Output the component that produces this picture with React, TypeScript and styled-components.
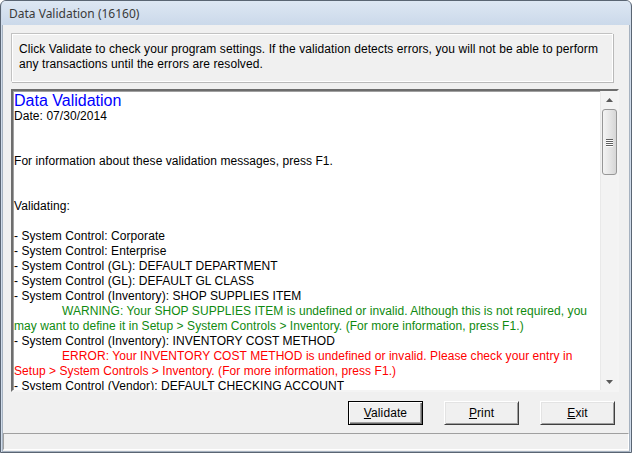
import React from 'react'
import styled, {createGlobalStyle} from 'styled-components'

const GlobalStyle = createGlobalStyle`
	html, body {
		margin: 0;
		padding: 0;
		background: #ffffff;
	}
	body {
		font-family: 'Liberation Sans', Arial, sans-serif;
		font-size: 12px;
	}
`

const Window = styled.div`
	width: 632px;
	height: 453px;
	box-sizing: border-box;
	border: 1px solid #5a6573;
	border-radius: 6px 6px 0 0;
	background: #cfdbea;
	padding: 0 1px;
	display: flex;
	flex-direction: column;
	overflow: hidden;
`

const TitleBar = styled.div`
	height: 24px;
	flex: none;
	display: flex;
	align-items: center;
	padding-left: 7px;
	background: linear-gradient(#dde7f3, #cbd9ea);
	color: #3a3a3a;
	font-family: 'Noto Sans', 'Open Sans', sans-serif;
	font-size: 12px;
`

const Body = styled.div`
	flex: 1;
	display: flex;
	flex-direction: column;
	background: #f0f0f0;
	border: 1px solid #a6b2c0;
	border-top: none;
`

const Content = styled.div`
	display: flex;
	flex-direction: column;
	padding: 8px 10px 0 8px;
`

const InfoBox = styled.div`
	height: 49px;
	box-sizing: border-box;
	margin-right: 6px;
	padding: 8px 7px 0 7px;
	border: 1px solid #c2c2c2;
	border-right-color: #ffffff;
	border-bottom-color: #ffffff;
	box-shadow: inset 1px 1px 0 #ffffff, 1px 1px 0 #b9b9b9;
	line-height: 15px;
	letter-spacing: 0.08px;
	color: #000;
`

const TextBox = styled.div`
	margin-top: 7px;
	height: 303px;
	box-sizing: border-box;
	display: flex;
	background: #ffffff;
	border-style: solid;
	border-width: 2px;
	border-color: #6d6d6d #f4f4f4 #f4f4f4 #6d6d6d;
	box-shadow: inset 1px 1px 0 #a0a0a0;
`

const Report = styled.div`
	flex: 1;
	overflow: hidden;
	padding: 2px 0 0 1px;
	line-height: 15px;
	letter-spacing: 0.06px;
	color: #000;
`

const Heading = styled.div`
	font-size: 16px;
	line-height: 16px;
	letter-spacing: 0;
	color: #0000ff;
`

const Line = styled.div<{$tone?: 'warn' | 'error'; $indent?: boolean}>`
	white-space: pre;
	height: 15px;
	padding-left: ${p => (p.$indent ? '48px' : '0')};
	color: ${p => (p.$tone === 'warn' ? '#0f8a0f' : p.$tone === 'error' ? '#ff0000' : '#000')};
`

const ScrollBar = styled.div`
	width: 17px;
	flex: none;
	display: flex;
	flex-direction: column;
	background: #f3f3f3;
	border-left: 1px solid #e9e9e9;
	box-sizing: border-box;
`

const ArrowButton = styled.div`
	height: 17px;
	flex: none;
	display: flex;
	align-items: center;
	justify-content: center;
`

const Track = styled.div`
	flex: 1;
	padding-top: 1px;
`

const Thumb = styled.div`
	height: 66px;
	margin-left: 1px;
	box-sizing: border-box;
	border: 1px solid #979797;
	border-radius: 3px;
	background: linear-gradient(to right, #f4f4f4, #e6e6e6 50%, #d6d6d6);
	display: flex;
	align-items: center;
	justify-content: center;
`

const Grip = styled.div`
	width: 7px;
	display: flex;
	flex-direction: column;
	gap: 1px;
`

const GripLine = styled.div`
	height: 1px;
	background: #5f5f5f;
	box-shadow: 0 1px 0 #ffffff;
`

const ButtonRow = styled.div`
	margin-top: 9px;
	margin-right: 4px;
	display: flex;
	justify-content: flex-end;
	gap: 21px;
`

const Button = styled.button<{$default?: boolean}>`
	width: 75px;
	height: 24px;
	box-sizing: border-box;
	padding: 0;
	background: #f0f0f0;
	font-family: 'Liberation Sans', Arial, sans-serif;
	font-size: 12px;
	letter-spacing: 0.1px;
	color: #000;
	border: 1px solid;
	border-color: ${p => (p.$default ? '#000' : '#ffffff #404040 #404040 #ffffff')};
	box-shadow: ${p =>
		p.$default
			? 'inset 1px 1px 0 #ffffff, inset -1px -1px 0 #696969, inset -2px -2px 0 #a0a0a0'
			: 'inset 1px 1px 0 #e3e3e3, inset -1px -1px 0 #a0a0a0'};
`

const StatusBar = styled.div`
	margin-top: 8px;
	height: 17px;
	box-sizing: border-box;
	border: 1px solid;
	border-color: #a0a0a0 #ffffff #ffffff #a0a0a0;
`

const Arrow = ({up}: {up?: boolean}) => (
	<svg width="7" height="4" viewBox="0 0 7 4">
		<path d={up ? 'M3.5 0 L7 4 L0 4 Z' : 'M0 0 L7 0 L3.5 4 Z'} fill="#5a5a5a" />
	</svg>
)

const lines: {text: string; tone?: 'warn' | 'error'; indent?: boolean}[] = [
	{text: 'Date: 07/30/2014'},
	{text: ''},
	{text: ''},
	{text: 'For information about these validation messages, press F1.'},
	{text: ''},
	{text: ''},
	{text: 'Validating:'},
	{text: ''},
	{text: '- System Control: Corporate'},
	{text: '- System Control: Enterprise'},
	{text: '- System Control (GL): DEFAULT DEPARTMENT'},
	{text: '- System Control (GL): DEFAULT GL CLASS'},
	{text: '- System Control (Inventory): SHOP SUPPLIES ITEM'},
	{text: 'WARNING: Your SHOP SUPPLIES ITEM is undefined or invalid. Although this is not required, you', tone: 'warn', indent: true},
	{text: 'may want to define it in Setup > System Controls > Inventory. (For more information, press F1.)', tone: 'warn'},
	{text: '- System Control (Inventory): INVENTORY COST METHOD'},
	{text: 'ERROR: Your INVENTORY COST METHOD is undefined or invalid. Please check your entry in', tone: 'error', indent: true},
	{text: 'Setup > System Controls > Inventory. (For more information, press F1.)', tone: 'error'},
	{text: '- System Control (Vendor): DEFAULT CHECKING ACCOUNT'},
]

const Accel = ({children}: {children: string}) => (
	<>
		<u>{children[0]}</u>
		{children.slice(1)}
	</>
)

export default function App() {
	return (
		<>
			<GlobalStyle />
			<Window>
				<TitleBar>Data Validation (16160)</TitleBar>
				<Body>
					<Content>
						<InfoBox>
							Click Validate to check your program settings. If the validation detects errors, you will not be able to perform
							<br />
							any transactions until the errors are resolved.
						</InfoBox>
						<TextBox>
							<Report>
								<Heading>Data Validation</Heading>
								{lines.map((l, i) => (
									<Line key={i} $tone={l.tone} $indent={l.indent}>
										{l.text}
									</Line>
								))}
							</Report>
							<ScrollBar>
								<ArrowButton>
									<Arrow up />
								</ArrowButton>
								<Track>
									<Thumb>
										<Grip>
											<GripLine />
											<GripLine />
											<GripLine />
											<GripLine />
										</Grip>
									</Thumb>
								</Track>
								<ArrowButton>
									<Arrow />
								</ArrowButton>
							</ScrollBar>
						</TextBox>
						<ButtonRow>
							<Button $default>
								<Accel>Validate</Accel>
							</Button>
							<Button>
								<Accel>Print</Accel>
							</Button>
							<Button>
								<Accel>Exit</Accel>
							</Button>
						</ButtonRow>
					</Content>
					<StatusBar />
				</Body>
			</Window>
		</>
	)
}
